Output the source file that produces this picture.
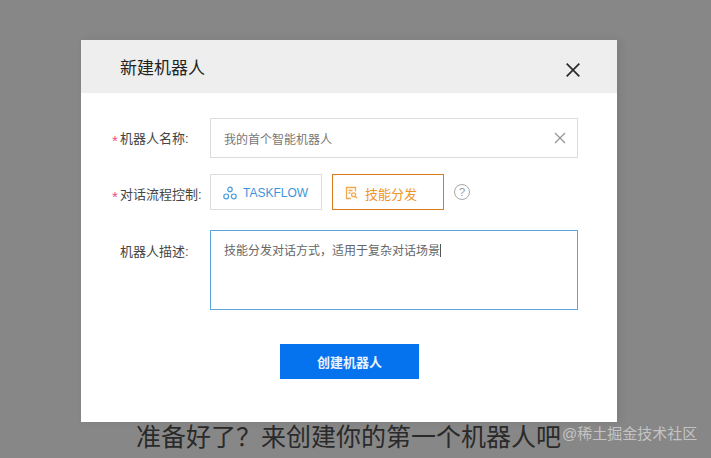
<template>
  <div class="page">
    <p class="behind">准备好了？来创建你的第一个机器人吧</p>
    <span class="mark">@稀土掘金技术社区</span>
    <div class="modal">
      <header class="head">
        <h2 class="title">新建机器人</h2>
        <svg class="close" width="16" height="16" viewBox="0 0 16 16" fill="none" stroke="#2b2b2b" stroke-width="1.7">
          <path d="M1.7 1.7 L14.3 14.3 M14.3 1.7 L1.7 14.3" />
        </svg>
      </header>
      <div class="body">
        <div class="row">
          <label class="label req">机器人名称:</label>
          <div class="field input">
            <span class="ph">我的首个智能机器人</span>
            <svg class="clear" width="12" height="12" viewBox="0 0 12 12" fill="none" stroke="#999" stroke-width="1.4">
              <path d="M1 1 L11 11 M11 1 L1 11" />
            </svg>
          </div>
        </div>
        <div class="row second">
          <label class="label req">对话流程控制:</label>
          <div class="choices">
            <div class="choice flow">
              <svg width="14" height="14" viewBox="0 0 14 14" fill="none" stroke="#4a9bdc" stroke-width="1.2">
                <circle cx="7" cy="3.4" r="2.2" />
                <circle cx="3.2" cy="10.4" r="2.4" />
                <circle cx="10.8" cy="10.4" r="2.4" />
              </svg>
              <span>TASKFLOW</span>
            </div>
            <div class="choice skill">
              <svg width="14" height="14" viewBox="0 0 14 14" fill="none" stroke="#f3a84e" stroke-width="1.3">
                <path d="M10.5 5.5 V1.5 H1.5 V12.5 H6" />
                <path d="M3.5 4.5 H7.5 M3.5 7 H5.5" />
                <circle cx="8.6" cy="8.8" r="2" />
                <path d="M10 10.3 L12 12.3" />
              </svg>
              <span>技能分发</span>
            </div>
            <span class="help">?</span>
          </div>
        </div>
        <div class="row top">
          <label class="label">机器人描述:</label>
          <div class="field area">技能分发对话方式，适用于复杂对话场景<i class="caret"></i></div>
        </div>
        <div class="actions">
          <button class="submit" type="button">创建机器人</button>
        </div>
      </div>
    </div>
  </div>
</template>

<style scoped>
.page {
  position: relative;
  width: 711px;
  height: 458px;
  overflow: hidden;
  background: #878787;
  font-family: "Liberation Sans", "Noto Sans CJK SC", sans-serif;
}
.behind {
  position: absolute;
  left: 136px;
  top: 420px;
  margin: 0;
  font-size: 25px;
  line-height: 34px;
  color: #2a2a2a;
  white-space: nowrap;
}
.mark {
  position: absolute;
  left: 562px;
  top: 424px;
  font-size: 15px;
  line-height: 20px;
  color: #c4c4c4;
  white-space: nowrap;
}
.modal {
  position: absolute;
  left: 81px;
  top: 40px;
  width: 536px;
  height: 382px;
  background: #fff;
  box-shadow: 3px 0 8px rgba(0, 0, 0, 0.08);
}
.head {
  height: 53px;
  background: #eeeeee;
  display: flex;
  align-items: center;
  justify-content: space-between;
  padding: 0 36px 0 39px;
}
.title {
  margin: 0 0 1px;
  font-size: 17px;
  font-weight: 400;
  color: #222;
}
.close {
  margin-top: 6px;
}
.body {
  padding: 25px 39px 0 39px;
}
.row {
  display: flex;
  align-items: center;
  margin-bottom: 16px;
}
.row.second {
  margin-bottom: 20px;
}
.row.second .label {
  margin-top: 4px;
}
.row.top {
  align-items: flex-start;
  margin-bottom: 34px;
}
.row.top .label {
  margin-top: 12px;
}
.label {
  position: relative;
  top: 1px;
  width: 90px;
  flex: none;
  font-size: 13px;
  line-height: 18px;
  color: #444;
  white-space: nowrap;
}
.req::before {
  content: "*";
  position: absolute;
  left: -8px;
  top: 2px;
  color: #ee4f80;
  font-size: 15px;
}
.field {
  box-sizing: border-box;
  width: 368px;
  font-size: 12px;
  color: #666;
}
.input {
  height: 40px;
  border: 1px solid #dcdcdc;
  display: flex;
  align-items: center;
  justify-content: space-between;
  padding: 0 11px 0 13px;
}
.ph {
  color: #777;
}
.choices {
  display: flex;
  align-items: center;
}
.choice {
  box-sizing: border-box;
  width: 112px;
  height: 36px;
  display: flex;
  align-items: center;
  padding: 2px 0 0 12px;
  gap: 6px;
}
.flow {
  border: 1px solid #dcdcdc;
  color: #3d94dc;
  margin-right: 10px;
  font-size: 12px;
}
.skill {
  border: 1px solid #d9791c;
  color: #f0942a;
  font-size: 13px;
}
.help {
  box-sizing: border-box;
  width: 16px;
  height: 16px;
  margin-left: 10px;
  border: 1px solid #a8a8a8;
  border-radius: 50%;
  font-size: 11px;
  line-height: 14px;
  text-align: center;
  color: #999;
}
.area {
  height: 80px;
  border: 1px solid #5ba7db;
  padding: 11px 13px;
  line-height: 18px;
}
.caret {
  display: inline-block;
  width: 1px;
  height: 13px;
  background: #555;
  vertical-align: -2px;
}
.actions {
  display: flex;
  justify-content: center;
  padding-left: 1px;
}
.submit {
  width: 139px;
  height: 35px;
  border: 0;
  background: #0673ee;
  color: #e8f2ff;
  font-family: inherit;
  font-size: 13px;
  font-weight: 700;
}
</style>
